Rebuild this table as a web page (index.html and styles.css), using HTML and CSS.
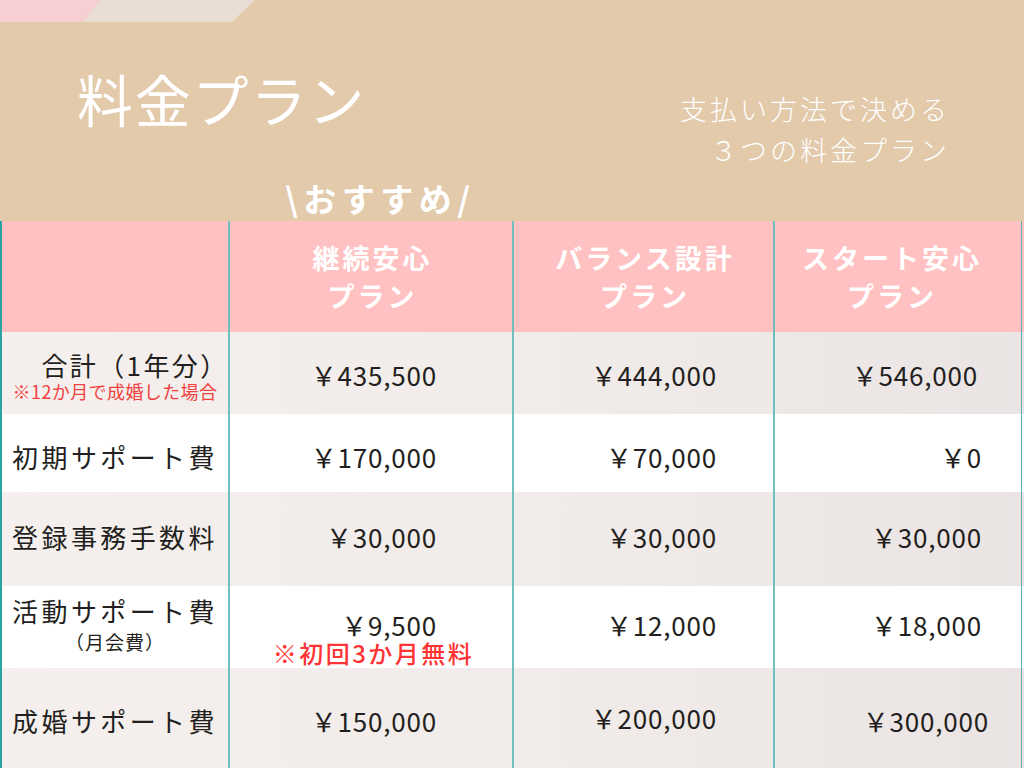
FILE: index.html
```html
<!DOCTYPE html>
<html lang="ja">
<head>
<meta charset="utf-8">
<title>料金プラン</title>
<link rel="stylesheet" href="styles.css">
</head>
<body>
<div class="page">
  <header class="hero">
    <svg class="strip" width="260" height="22" viewBox="0 0 260 22" aria-hidden="true">
      <polygon points="0,0 100,0 83,22 0,22" fill="#F7CED1"/>
      <polygon points="100,0 255,0 232,22 83,22" fill="#EADED4"/>
    </svg>
    <div class="hero-main">
      <h1 class="title">料金プラン</h1>
      <p class="sub">支払い方法で決める<br>３つの料金プラン</p>
    </div>
    <p class="recommend">\おすすめ/</p>
  </header>

  <section class="table">
    <div class="row head">
      <div class="cell"></div>
      <div class="cell">継続安心<br>プラン</div>
      <div class="cell">バランス設計<br>プラン</div>
      <div class="cell head-c4">スタート安心<br>プラン</div>
      <div class="cell edge"></div>
    </div>

    <div class="row light r1">
      <div class="cell label">
        <span class="l-main l-indent">合計（1年分）</span>
        <span class="l-note">※12か月で成婚した場合</span>
      </div>
      <div class="cell val c2">￥435,500</div>
      <div class="cell val c3">￥444,000</div>
      <div class="cell val c4 c4-a">￥546,000</div>
      <div class="cell edge"></div>
    </div>

    <div class="row white r2">
      <div class="cell label"><span class="l-main">初期サポート費</span></div>
      <div class="cell val c2">￥170,000</div>
      <div class="cell val c3">￥70,000</div>
      <div class="cell val c4">￥0</div>
      <div class="cell edge"></div>
    </div>

    <div class="row light r3">
      <div class="cell label"><span class="l-main">登録事務手数料</span></div>
      <div class="cell val c2">￥30,000</div>
      <div class="cell val c3">￥30,000</div>
      <div class="cell val c4">￥30,000</div>
      <div class="cell edge"></div>
    </div>

    <div class="row white r4">
      <div class="cell label">
        <span class="l-main">活動サポート費</span>
        <span class="l-sub">（月会費）</span>
      </div>
      <div class="cell val c2 clip">
        <span>￥9,500</span>
        <span class="free">※初回3か月無料</span>
      </div>
      <div class="cell val c3">￥12,000</div>
      <div class="cell val c4">￥18,000</div>
      <div class="cell edge"></div>
    </div>

    <div class="row light r5">
      <div class="cell label"><span class="l-main">成婚サポート費</span></div>
      <div class="cell val c2">￥150,000</div>
      <div class="cell val c3 c3-up">￥200,000</div>
      <div class="cell val c4 c4-b">￥300,000</div>
      <div class="cell edge"></div>
    </div>
  </section>
</div>
</body>
</html>
```

FILE: styles.css
```css
* { box-sizing: border-box; }

html, body {
  margin: 0;
  padding: 0;
}

body {
  font-family: "Noto Sans CJK JP", "Noto Sans", sans-serif;
  color: #231f20;
  background: #ffffff;
}

.page {
  width: 1024px;
  height: 768px;
  overflow: hidden;
}

/* ---------- hero ---------- */
.hero {
  height: 221px;
  background: #E2CAAB;
  color: #ffffff;
  display: flex;
  flex-direction: column;
}

.strip {
  display: block;
  flex: none;
}

.hero-main {
  display: flex;
  justify-content: space-between;
  align-items: flex-start;
  padding: 0 74px 0 77px;
}

.title {
  margin: 48px 0 0 0;
  font-size: 56px;
  line-height: 56px;
  font-weight: 400;
  letter-spacing: 1.8px;
}

.sub {
  margin: 66px 0 0 0;
  font-size: 27px;
  line-height: 41px;
  font-weight: 300;
  letter-spacing: 3px;
  text-align: right;
}

.recommend {
  margin: 12px 0 0 285px;
  font-size: 33px;
  line-height: 33px;
  font-weight: 700;
  letter-spacing: 5.5px;
}

/* ---------- table ---------- */
.row {
  display: grid;
  grid-template-columns: 228px 284px 261px 248px 3px;
}

.cell {
  border-left: 2px solid #6FBFBF;
  display: flex;
  flex-direction: column;
}

.cell.clip {
  overflow: hidden;
}

.cell:first-child {
  border-left: 2px solid #2AA3A3;
}

.cell.edge {
  border-left: 1px solid #5FB2B2;
}

.head {
  height: 111px;
  background: #FFC1C1;
}

.head .cell {
  justify-content: center;
  align-items: center;
  text-align: center;
  color: #ffffff;
  font-size: 27px;
  line-height: 38px;
  font-weight: 700;
  letter-spacing: 3px;
  padding-left: 3px;
}

.head .head-c4 {
  padding-left: 0;
  padding-right: 12px;
}

.light {
  background: linear-gradient(90deg, #F5F0ED 0%, #F1EBE9 55%, #EAE4E4 100%);
}

.white {
  background: #ffffff;
}

.r1 { height: 82px; }
.r2 { height: 78px; }
.r3 { height: 94px; }
.r4 { height: 82px; }
.r5 { height: 100px; }

.label {
  align-items: center;
  text-align: center;
}

.l-main {
  font-size: 26px;
  line-height: 30px;
  letter-spacing: 3.4px;
  white-space: nowrap;
}

.l-indent {
  padding-left: 40px;
  letter-spacing: 2.4px;
}

.l-note {
  margin-top: 1px;
  font-size: 18px;
  line-height: 20px;
  letter-spacing: 0.4px;
  color: #F23F3F;
  white-space: nowrap;
}

.l-sub {
  margin-top: 4px;
  font-size: 19px;
  line-height: 24px;
  letter-spacing: 1px;
}

.val {
  font-size: 26px;
  line-height: 30px;
  letter-spacing: 0.8px;
  align-items: flex-end;
  white-space: nowrap;
}

.c2 { padding-right: 75px; }
.c3 { padding-right: 56px; }
.c4 { padding-right: 39px; }
.c4-a { padding-right: 43px; }
.c4-b { padding-right: 32px; }

.free {
  align-self: center;
  margin-left: 80px;
  font-size: 24px;
  line-height: 26px;
  font-weight: 500;
  letter-spacing: 2.5px;
  color: #FF3434;
}

/* vertical placement per row */
.r1 .label { padding-top: 18px; }
.r1 .val { padding-top: 28px; }
.r2 .cell { padding-top: 28px; }
.r3 .cell { padding-top: 30px; }
.r4 .label { padding-top: 10px; }
.r4 .val { padding-top: 24px; }
.r5 .cell { padding-top: 38px; }
.r5 .c3-up { padding-top: 35px; }
.head .cell, .row .edge { padding-top: 0; }
```
